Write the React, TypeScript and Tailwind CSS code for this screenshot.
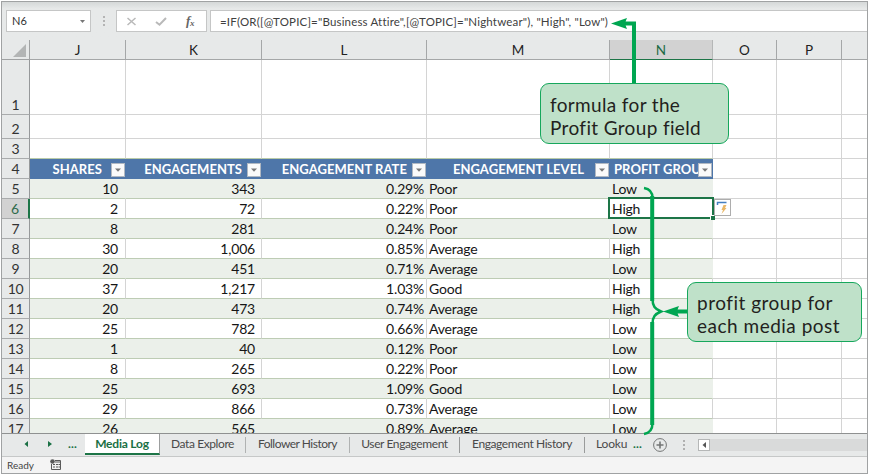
import React from "react";

const columns = [
  { name: "J", width: "w-[96px]" },
  { name: "K", width: "w-[136px]" },
  { name: "L", width: "w-[165px]" },
  { name: "M", width: "w-[183px]" },
  { name: "N", width: "w-[103px]" },
  { name: "O", width: "w-[64px]" },
  { name: "P", width: "w-[65px]" },
];

const records: [number, string, string, string, string, string][] = [
  [5, "10", "343", "0.29%", "Poor", "Low"],
  [6, "2", "72", "0.22%", "Poor", "High"],
  [7, "8", "281", "0.24%", "Poor", "Low"],
  [8, "30", "1,006", "0.85%", "Average", "High"],
  [9, "20", "451", "0.71%", "Average", "Low"],
  [10, "37", "1,217", "1.03%", "Good", "High"],
  [11, "20", "473", "0.74%", "Average", "High"],
  [12, "25", "782", "0.66%", "Average", "Low"],
  [13, "1", "40", "0.12%", "Poor", "Low"],
  [14, "8", "265", "0.22%", "Poor", "Low"],
  [15, "25", "693", "1.09%", "Good", "Low"],
  [16, "29", "866", "0.73%", "Average", "Low"],
  [17, "26", "565", "0.89%", "Average", "Low"],
];

function RowHead({ n, active = false }: { n: number; active?: boolean }) {
  return (
    <div
      className={`flex w-[28px] shrink-0 items-end justify-center border-b border-[#a9abac] text-[14px] leading-[18px] tracking-[-0.3px] ${
        active
          ? "border-r-2 border-r-[#1d7547] bg-[#d2d2d2] text-[#2f6b4c]"
          : "border-r border-r-[#96989a] bg-[#e7e9e9] text-[#333]"
      }`}
    >
      {n}
    </div>
  );
}

function EmptyRow({ n, height }: { n: number; height: string }) {
  return (
    <div className={`flex shrink-0 ${height}`}>
      <RowHead n={n} />
      {columns.map((c) => (
        <div key={c.name} className={`shrink-0 border-r border-b border-[#d4d4d4] ${c.width} ${n === 3 && c.name <= "N" ? "border-b-[#b9cba9]" : ""}`} />
      ))}
      <div className="flex-1 border-b border-[#d4d4d4]" />
    </div>
  );
}

function OuterCells() {
  return (
    <>
      <div className="w-[64px] shrink-0 border-r border-b border-[#d4d4d4]" />
      <div className="w-[65px] shrink-0 border-r border-b border-[#d4d4d4]" />
      <div className="flex-1 border-b border-[#d4d4d4]" />
    </>
  );
}

function FilterButton() {
  return (
    <span className="mt-[2px] flex h-[14px] w-[14px] shrink-0 items-center justify-center border border-[#b0b8c2] bg-[#fafafa]">
      <svg width="6" height="4" viewBox="0 0 6 4"><path d="M0 0.5H6L3 3.7Z" fill="#777" /></svg>
    </span>
  );
}

function HeadCell({ label, width, gap }: { label: string; width: string; gap: string }) {
  return (
    <div className={`flex shrink-0 items-center justify-end bg-[#4e76a9] pr-px ${gap} ${width}`}>
      <span className="text-[13px] font-bold leading-[19px] tracking-[0.05px] whitespace-nowrap text-white">{label}</span>
      <FilterButton />
    </div>
  );
}

function Record({ row }: { row: [number, string, string, string, string, string] }) {
  const [n, shares, engagements, rate, level, group] = row;
  const shaded = n % 2 === 1;
  const cell = `shrink-0 border-b border-b-[#bdccb4] border-r ${shaded ? "bg-[#ebf0ea] border-r-[#ebf0ea]" : "bg-white border-r-[#d4d4d4]"}`;
  return (
    <div className="flex h-[20px] shrink-0 text-[14px] leading-[19px] tracking-[-0.2px] text-[#161616]">
      <RowHead n={n} active={n === 6} />
      <div className={`${cell} w-[96px] pr-[7px] text-right`}>{shares}</div>
      <div className={`${cell} w-[136px] pr-[6px] text-right`}>{engagements}</div>
      <div className={`${cell} w-[165px] pr-[2px] text-right`}>{rate}</div>
      <div className={`${cell} w-[183px] pl-[2px]`}>{level}</div>
      <div className={`${cell} w-[103px] border-r-[#cbd8c2] pl-[2px]`}>{group}</div>
      <OuterCells />
    </div>
  );
}

function FormulaBar() {
  return (
    <div className="flex h-[38px] shrink-0 items-start bg-linear-to-b from-[#d5d8d8] via-[#e7e9e9] via-[18%] to-[#e7e9e9] pt-[8px] pl-[4px]">
      <div className="flex h-[22px] w-[85px] items-center justify-between border border-[#c5c6c6] bg-white pr-[5px] pl-[5px] text-[11px] text-[#333]">
        N6
        <svg width="5" height="3" viewBox="0 0 5 3"><path d="M0 0H5L2.5 3Z" fill="#777" /></svg>
      </div>
      <div className="flex h-[22px] w-[25px] flex-col items-center justify-center gap-[2px]">
        <i className="h-[2px] w-[2px] bg-[#b4b4b4]" /><i className="h-[2px] w-[2px] bg-[#b4b4b4]" /><i className="h-[2px] w-[2px] bg-[#b4b4b4]" />
      </div>
      <div className="flex h-[22px] w-[91px] items-center border border-[#c5c6c6] bg-white">
        <svg width="89" height="20" viewBox="0 0 89 20" fill="none" stroke="#b9b9b9">
          <path d="M10.5 7L18.5 14M18.5 7L10.5 14" strokeWidth="1.5" />
          <path d="M39 11L42.5 13.7L49 7" strokeWidth="2" />
          <text x="69" y="14" fill="#666" stroke="none" fontFamily="Liberation Serif, serif" fontStyle="italic" fontWeight="bold" fontSize="13">f</text>
          <text x="73" y="14.5" fill="#666" stroke="none" fontFamily="Liberation Serif, serif" fontStyle="italic" fontWeight="bold" fontSize="9">x</text>
        </svg>
      </div>
      <div className="ml-[3px] h-[22px] flex-1 border border-r-0 border-[#c5c6c6] bg-white pl-[9px] text-[11.5px] leading-[21px] tracking-[0.18px] whitespace-pre text-[#404040]">
        =IF(OR([@TOPIC]="Business Attire",[@TOPIC]="Nightwear"), "High", "Low")
      </div>
    </div>
  );
}

function SheetTabs() {
  return (
    <div className="flex h-[24px] shrink-0 items-start border-t border-b border-t-[#8f9191] border-b-[#c6c8c8] bg-[#e7e9e9] text-[12px] leading-[20px] tracking-[-0.4px] whitespace-nowrap text-[#4a4a4a]">
      <div className="flex w-[83px] items-center pl-[22px] text-[#1a7044]">
        <svg width="30" height="8" viewBox="0 0 30 8" fill="#1a7044"><path d="M4 1V7L0.5 4ZM24 1V7L28 4Z" /></svg>
        <b className="ml-[14px] leading-[20px] tracking-[0.2px]">...</b>
      </div>
      <div className="h-[21px] w-[75px] border-r border-b-2 border-r-[#9c9e9e] border-b-[#1d7547] bg-white text-center font-bold leading-[20px] tracking-[-0.2px] text-[#1a7044]">Media Log</div>
      <div className="my-[3px] h-[16px] w-[86px] border-r border-[#b0b2b2] text-center leading-[14px]">Data Explore</div>
      <div className="my-[3px] h-[16px] w-[104px] border-r border-[#b0b2b2] text-center leading-[14px] tracking-[-0.5px]">Follower History</div>
      <div className="my-[3px] h-[16px] w-[110px] border-r border-[#999b9b] text-center leading-[14px]">User Engagement</div>
      <div className="my-[3px] h-[16px] w-[125px] border-r border-[#999b9b] text-center leading-[14px]">Engagement History</div>
      <div className="my-[3px] w-[48px] pl-[11px] leading-[14px] tracking-[-0.2px]">Looku</div>
      <b className="w-[19px] tracking-[0.2px] text-[#1a7044]">...</b>
      <svg className="mt-[3px]" width="16" height="16" viewBox="0 0 16 16" fill="none" stroke="#747676"><circle cx="8" cy="8" r="6.4" /><path d="M4.5 8H11.5M8 4.5V11.5" strokeWidth="1.6" /></svg>
      <div className="ml-px flex h-[22px] w-[29px] flex-col items-center justify-center gap-[2px]">
        <i className="h-[2px] w-[2px] bg-[#b0b0b0]" /><i className="h-[2px] w-[2px] bg-[#b0b0b0]" /><i className="h-[2px] w-[2px] bg-[#b0b0b0]" />
      </div>
      <div className="mt-[5px] flex h-[12px] flex-1 bg-[#d9dada]">
        <div className="flex w-[12px] items-center justify-center border border-[#b5b7b7] bg-white"><svg width="5" height="6" viewBox="0 0 5 6"><path d="M4 0V6L0.5 3Z" fill="#555" /></svg></div>
      </div>
    </div>
  );
}

function Annotations() {
  return (
    <>
      <div className="absolute top-[197px] left-[608px] h-[22px] w-[106px] border-2 border-[#1d7547]" />
      <div className="absolute top-[215px] left-[710px] h-[5px] w-[5px] border-t border-l border-white bg-[#1d7547]" />
      <svg className="absolute top-[199px] left-[714px]" width="18" height="18" viewBox="0 0 18 18">
        <rect x="0.5" y="0.5" width="16" height="16" fill="#fff" stroke="#adadad" />
        <path d="M3.5 6V3.5H12.5" fill="none" stroke="#457fc0" strokeWidth="1.5" />
        <path d="M9.5 6H12.5L11 9H12.5L7.5 15L9 11H7.5Z" fill="#e9b766" />
      </svg>
      <svg className="absolute top-0 left-0" width="869" height="475" viewBox="0 0 869 475" fill="none">
        <path d="M634 85V23.5H622" stroke="#00a651" strokeWidth="4" />
        <path d="M611 23.5L627 18Q624 23.5 627 29Z" fill="#00a651" />
        <path d="M644 188C650 189 652.5 192 652.5 198V299C652.5 306 655 309 661 311.5C655 314 652.5 317 652.5 324V423C652.5 429 650 433 644 434" stroke="#00a651" strokeWidth="2.5" />
        <path d="M652.2 196V301M652.2 322V425" stroke="#00a651" strokeWidth="4" />
        <path d="M687 311.5H674" stroke="#00a651" strokeWidth="4" />
        <path d="M663 311.5L679 306Q676 311.5 679 317Z" fill="#00a651" />
      </svg>
      <div className="absolute top-[83px] left-[540px] h-[61px] w-[189px] rounded-[9px] border-[1.5px] border-[#16a75c] bg-[#bfe1c9] pt-[9px] pl-[9px] text-[19px] leading-[23px] tracking-[0.35px] whitespace-nowrap text-[#231f20]">
        <p>formula for the</p>
        <p>Profit Group field</p>
      </div>
      <div className="absolute top-[282px] left-[687px] h-[60px] w-[175px] rounded-[9px] border-[1.5px] border-[#16a75c] bg-[#bfe1c9] pt-[8px] pl-[9px] text-[19px] leading-[23px] tracking-[0.5px] whitespace-nowrap text-[#231f20]">
        <p>profit group for</p>
        <p>each media post</p>
      </div>
    </>
  );
}

export default function App() {
  return (
    <div className="relative h-[475px] w-[869px] overflow-hidden bg-white pt-px pl-px font-['Lato',sans-serif]">
      <div className="flex h-[473px] w-[867px] flex-col border border-[#a0a2a3]">
        <FormulaBar />
        <div className="flex h-[20px] shrink-0 bg-[#e7e9e9] text-[13.5px] text-[#222]">
          <div className="flex w-[28px] shrink-0 items-end justify-end border-r border-b border-[#a0a2a3] pr-[3px] pb-[2px]">
            <svg width="13" height="13" viewBox="0 0 13 13"><path d="M13 0V13H0Z" fill="#b3b5b5" /></svg>
          </div>
          {columns.map((c) => (
            <div
              key={c.name}
              className={`shrink-0 border-r border-b text-center leading-[20px] ${c.width} ${
                c.name === "N" ? "border-r-[#b5b7b7] border-b-[#1d7547] bg-[#d2d2d2] text-[#1d6b45]" : "border-[#a5a7a8]"
              }`}
            >
              {c.name}
            </div>
          ))}
          <div className="flex-1 border-b border-[#a5a7a8]" />
        </div>
        <div className="flex h-[373px] shrink-0 flex-col overflow-hidden">
          <EmptyRow n={1} height="h-[55px]" />
          <EmptyRow n={2} height="h-[24px]" />
          <EmptyRow n={3} height="h-[20px]" />
          <div className="flex h-[20px] shrink-0">
            <RowHead n={4} />
            <HeadCell label="SHARES" width="w-[96px]" gap="gap-[9px]" />
            <HeadCell label="ENGAGEMENTS" width="w-[136px]" gap="gap-[5px]" />
            <HeadCell label="ENGAGEMENT RATE" width="w-[165px]" gap="gap-[5px]" />
            <HeadCell label="ENGAGEMENT LEVEL" width="w-[183px]" gap="gap-[11px]" />
            <div className="flex w-[103px] shrink-0 items-center bg-[#4e76a9] pr-px pl-[4px]">
              <span className="w-[84px] shrink-0 overflow-hidden text-[13px] font-bold leading-[19px] tracking-[0.05px] whitespace-nowrap text-white">PROFIT GROUP</span>
              <FilterButton />
            </div>
            <OuterCells />
          </div>
          {records.map((r) => <Record key={r[0]} row={r} />)}
        </div>
        <SheetTabs />
        <div className="flex flex-1 items-center bg-[#f4f4f4] pl-[5px] text-[10px] text-[#444]">
          <span className="w-[43px]">Ready</span>
          <svg width="12" height="12" viewBox="0 0 12 12" fill="none" stroke="#5a5a5a">
            <path d="M5 1.5H10.5V10.5H1.5V5" /><path d="M5 3H10M3 5.5H5M6 5.5H8M8.5 5.5H10M3 8H5M6 8H8M8.5 8H10" />
            <circle cx="2.5" cy="2.5" r="2.3" fill="#5a5a5a" stroke="none" />
          </svg>
        </div>
      </div>
      <Annotations />
    </div>
  );
}
